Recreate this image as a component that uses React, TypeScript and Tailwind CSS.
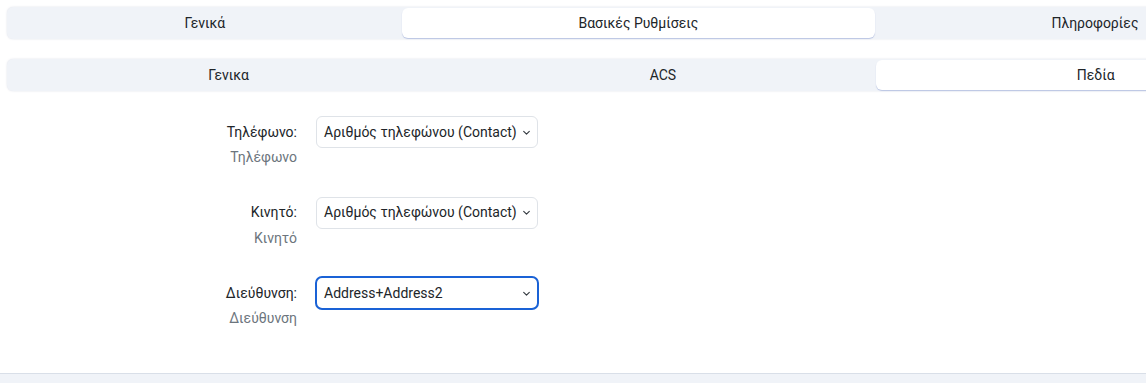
import React from 'react';

const topTabs = ['Γενικά', 'Βασικές Ρυθμίσεις', 'Πληροφορίες'];
const subTabs = ['Γενικα', 'ACS', 'Πεδία'];

const fields = [
  { label: 'Τηλέφωνο:', hint: 'Τηλέφωνο', value: 'Αριθμός τηλεφώνου (Contact)', focused: false },
  { label: 'Κινητό:', hint: 'Κινητό', value: 'Αριθμός τηλεφώνου (Contact)', focused: false },
  { label: 'Διεύθυνση:', hint: 'Διεύθυνση', value: 'Address+Address2', focused: true },
];

function Tabs({ items, active }: { items: string[]; active: number }) {
  return (
    <div className="flex h-8 rounded-md bg-[#f0f3f8] p-px shadow-[0_0_2px_rgba(60,80,120,0.18)]">
      {items.map((t, i) => (
        <button
          key={t}
          className={`flex-auto px-4 rounded-md text-[14px] text-[#212529] ${
            i === active ? 'bg-white shadow-[0_1px_1px_rgba(120,140,200,0.45)]' : ''
          }`}
        >
          {t}
        </button>
      ))}
    </div>
  );
}

function Chevron() {
  return (
    <svg width="9" height="9" viewBox="0 0 16 16" fill="none" className="shrink-0">
      <path d="M3 6l5 5 5-5" stroke="#343a40" strokeWidth="2" strokeLinecap="round" strokeLinejoin="round" />
    </svg>
  );
}

export default function App() {
  return (
    <div className="w-full overflow-hidden bg-white" style={{ fontFamily: 'Roboto, "Noto Sans", sans-serif' }}>
      <div className="w-[1323px] px-[7px] pt-[7px]">
        <Tabs items={topTabs} active={1} />
        <div className="mt-5">
          <Tabs items={subTabs} active={2} />
        </div>

        {/* Fields */}
        <div className="pt-[25px]">
          {fields.map((f) => (
            <div key={f.label} className="flex h-[80.5px] gap-[19px]">
              <div className="w-[290px] flex flex-col items-end">
                <div className="h-[32px] flex items-center text-[14px] text-[#212529]">{f.label}</div>
                <div className="text-[14px] leading-[18px] text-[#6c757d]">{f.hint}</div>
              </div>
              <button
                className={`w-[222px] h-[32px] flex items-center justify-between gap-[5px] pl-[7px] pr-[6px] rounded-md border border-[#dfe3e8] bg-white text-[14px] text-[#212529] ${
                  f.focused ? 'outline-2 outline-offset-[-1px] outline-[#1a62d6]' : ''
                }`}
              >
                <span className="whitespace-nowrap">{f.value}</span>
                <Chevron />
              </button>
            </div>
          ))}
        </div>
      </div>
      <div className="mt-[15px] h-[20px] border-t border-[#d9dfe8] bg-[#f0f3f8]" />
    </div>
  );
}
